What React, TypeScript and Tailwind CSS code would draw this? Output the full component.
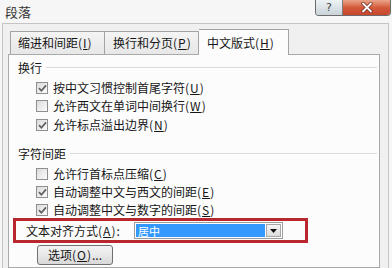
import React from "react";

const Mn = ({ k }: { k: string }) => (
  <span className="text-[12px] tracking-[1px]">
    (<u>{k}</u>)
  </span>
);

const Check = ({ checked }: { checked: boolean }) => (
  <span className="w-[12px] h-[12px] border border-[#8e8f8f] bg-gradient-to-br from-[#dcdcdc] to-[#fbfbfb] flex items-center justify-center shrink-0">
    {checked && (
      <svg width="9" height="9" viewBox="0 0 9 9">
        <path d="M1 4.2 L3.4 6.8 L8 1.4" stroke="#5f5f5f" strokeWidth="1.7" fill="none" />
      </svg>
    )}
  </span>
);

const Row = ({ checked, label, k, cls }: { checked: boolean; label: string; k: string; cls: string }) => (
  <div className={`flex items-center h-[18px] ml-[18px] gap-[5px] whitespace-nowrap ${cls}`}>
    <Check checked={checked} />
    <span>
      {label}
      <Mn k={k} />
    </span>
  </div>
);

const Heading = ({ text, cls }: { text: string; cls: string }) => (
  <div className={`flex items-center h-[14px] ${cls}`}>
    <span className="whitespace-nowrap">{text}</span>
    <div className="flex-1 ml-[4px] mr-[1px] border-t border-[#dadada] border-b-white border-b" />
  </div>
);

export default function App() {
  return (
    <div className="w-[392px] h-[268px] overflow-hidden bg-[#f6f6f6] flex flex-col text-[12px] leading-[14px] text-[#161616] font-['Noto_Sans_CJK_SC','Noto_Sans',sans-serif]">
      {/* title bar */}
      <div className="h-[23px] shrink-0 flex items-start justify-between">
        <span className="ml-[5px] mt-[4px] text-[13px] leading-[15px] text-[#333]">段落</span>
        <div className="flex h-[16px] mr-[1px] border border-t-0 border-[#6b6b6b] rounded-b-[4px] overflow-hidden">
          <div className="w-[27px] h-full bg-gradient-to-b from-[#eef3f5] to-[#c9d3d8] border-r border-[#7a7a7a] flex items-center justify-center">
            <span className="text-[11px] leading-none text-[#444] font-['DejaVu_Sans',sans-serif]">?</span>
          </div>
          <div className="w-[47px] h-full bg-gradient-to-b from-[#e8a48a] via-[#d45a3c] to-[#c8452c] flex items-center justify-center">
            <svg width="12" height="11" viewBox="0 0 12 11">
              <path d="M2 1.5 L10 9.5 M10 1.5 L2 9.5" stroke="#6b2a1e" strokeWidth="3.2" strokeLinecap="round" />
              <path d="M2 1.5 L10 9.5 M10 1.5 L2 9.5" stroke="#ffffff" strokeWidth="1.8" strokeLinecap="round" />
            </svg>
          </div>
        </div>
      </div>
      {/* dialog body */}
      <div className="flex-1 ml-[2px] mr-[3px] border-l border-t border-r border-[#c4c4c4] bg-[#f0f0f0] flex flex-col pl-[5px] pr-[8px] pt-[4px]">
        {/* tabs */}
        <div className="flex items-end h-[26px] pl-[2px] relative z-10">
          <div className="w-[95px] h-[23px] border border-b-0 border-[#a3a3a3] bg-gradient-to-b from-[#f4f4f4] to-[#e7e7e7] flex items-center pl-[7px] whitespace-nowrap">
            缩进和间距<Mn k="I" />
          </div>
          <div className="w-[94px] h-[23px] border border-l-0 border-b-0 border-[#a3a3a3] bg-gradient-to-b from-[#f4f4f4] to-[#e7e7e7] flex items-center pl-[8px] whitespace-nowrap">
            换行和分页<Mn k="P" />
          </div>
          <div className="w-[90px] h-[26px] -mb-[1px] border border-l-0 border-b-0 border-[#a3a3a3] bg-[#fcfcfc] flex items-center pl-[8px] whitespace-nowrap">
            中文版式<Mn k="H" />
          </div>
        </div>
        {/* panel */}
        <div className="flex-1 border border-[#a9a9a9] bg-[#fcfcfc] flex flex-col pl-[9px] pr-[1px]">
          <Heading text="换行" cls="mt-[6px]" />
          <Row checked label="按中文习惯控制首尾字符" k="U" cls="mt-[4px]" />
          <Row checked={false} label="允许西文在单词中间换行" k="W" cls="mt-0" />
          <Row checked label="允许标点溢出边界" k="N" cls="mt-[1px]" />
          <Heading text="字符间距" cls="mt-[13px]" />
          <Row checked={false} label="允许行首标点压缩" k="C" cls="mt-[4px]" />
          <Row checked label="自动调整中文与西文的间距" k="E" cls="mt-0" />
          <Row checked label="自动调整中文与数字的间距" k="S" cls="mt-0" />
          {/* highlighted row */}
          <div className="-ml-[5px] w-[295px] h-[25px] border-[3px] border-[#b9262e] flex items-center -mt-[1px]">
            <span className="ml-[10px] w-[108px] whitespace-nowrap">
              文本对齐方式<Mn k="A" />:
            </span>
            <div className="w-[149px] h-[17px] border border-[#9c9c9c] bg-white flex items-stretch p-[1px]">
              <div className="flex-1 bg-[#3399ff] text-white flex items-center pl-[2px] text-[11px]">居中</div>
              <div className="w-[15px] ml-[1px] border border-[#a8a8a8] bg-gradient-to-b from-[#f6f6f6] to-[#dcdcdc] flex items-center justify-center">
                <svg width="7" height="4" viewBox="0 0 7 4">
                  <path d="M0 0 L7 0 L3.5 4 Z" fill="#111" />
                </svg>
              </div>
            </div>
          </div>
          <div className="ml-[19px] mt-[2px] w-[76px] h-[20px] border border-[#707070] rounded-[3px] bg-gradient-to-b from-[#f3f3f3] via-[#e8e8e8] to-[#d8d8d8] flex items-center justify-center whitespace-nowrap">
            选项<Mn k="O" />...
          </div>
        </div>
      </div>
    </div>
  );
}
